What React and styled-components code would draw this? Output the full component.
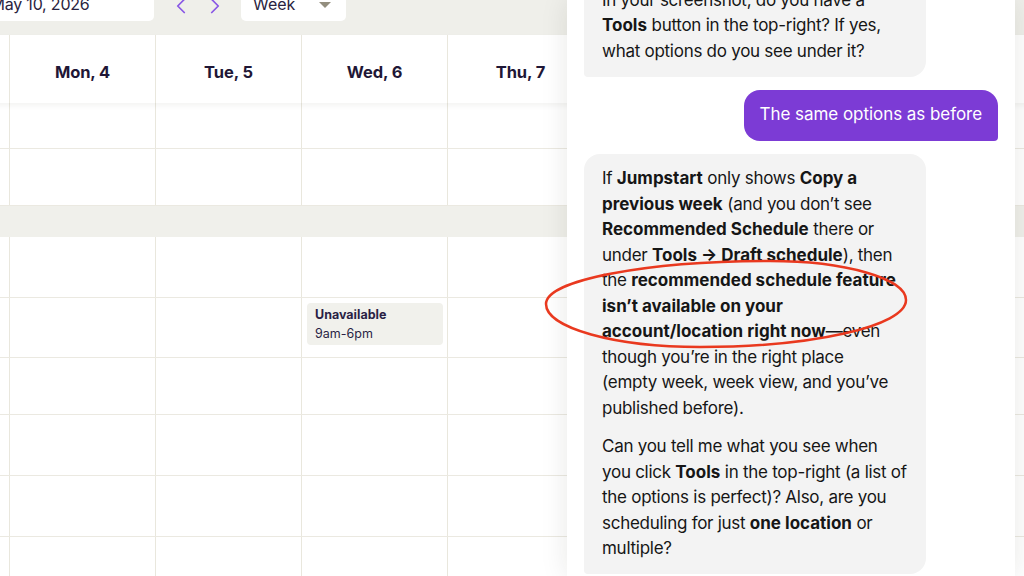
import React from "react";
import styled, { createGlobalStyle } from "styled-components";
import { ChevronLeft, ChevronRight } from "lucide-react";

const Global = createGlobalStyle`
  html, body { margin: 0; padding: 0; background: #ffffff; }
  body { font-family: Inter, "Noto Sans", sans-serif; -webkit-font-smoothing: antialiased; }
  * { box-sizing: border-box; }
`;

const Screen = styled.div`
  position: relative;
  width: 1024px;
  height: 576px;
  overflow: hidden;
  background: #ffffff;
`;

const Calendar = styled.div`
  margin: -15px 0 0 -100px;
  width: 1200px;
  display: flex;
  flex-direction: column;
`;

const Toolbar = styled.div`
  height: 50px;
  background: #efefea;
  display: flex;
  align-items: flex-start;
  gap: 12px;
  padding: 0 0 0 16px;
`;

const DateBox = styled.div`
  height: 36px;
  width: 238px;
  background: #ffffff;
  border-radius: 5px;
  display: flex;
  align-items: center;
  padding: 2px 0 0 12px;
  font-size: 16px;
  color: #2a2340;
  letter-spacing: -0.2px;
`;

const NavGroup = styled.div`
  display: flex;
  align-items: center;
  height: 36px;
  gap: 8px;
  padding: 6px 0 0 2px;
  color: #8957e5;
`;

const SelectBox = styled.div`
  height: 36px;
  width: 105px;
  margin-left: 1px;
  background: #ffffff;
  border-radius: 5px;
  display: flex;
  align-items: center;
  justify-content: space-between;
  padding: 2px 15px 0 12px;
  font-size: 16px;
  color: #2a2340;
`;

const Caret = styled.span`
  width: 0;
  height: 0;
  border-left: 6px solid transparent;
  border-right: 6px solid transparent;
  border-top: 6px solid #938e7e;
  margin-top: 1px;
`;

const cols = "109px repeat(7, 146px)";

const HeaderRow = styled.div`
  position: relative;
  z-index: 1;
  display: grid;
  grid-template-columns: ${cols};
  height: 68px;
  background: #ffffff;
  box-shadow: 0 3px 5px rgba(40, 35, 20, 0.05);
`;

const DayHead = styled.div`
  display: flex;
  align-items: center;
  justify-content: center;
  padding-top: 5px;
  border-left: ${(p) => (p.$stub ? "none" : "1px solid #e9e7dd")};
  font-size: 16.5px;
  font-weight: 700;
  color: #1f1736;
  letter-spacing: -0.1px;
`;

const Row = styled.div`
  display: grid;
  grid-template-columns: ${cols};
  height: ${(p) => p.$h}px;
  border-bottom: 1px solid #ebe9e1;
`;

const Cell = styled.div`
  border-left: ${(p) => (p.$stub ? "none" : "1px solid #e9e7dd")};
  padding: 5px 4px 0 5px;
`;

const Band = styled.div`
  height: 31px;
  background: #f0f0eb;
`;

const Shift = styled.div`
  height: 42px;
  background: #f1f1ec;
  border-radius: 4px;
  padding: 3px 8px 3px;
  display: flex;
  flex-direction: column;
  justify-content: center;
  gap: 3px;
  color: #2a1f45;
  font-size: 12.5px;
  line-height: 16px;
`;

const ShiftTitle = styled.span`
  font-weight: 700;
`;

const Panel = styled.aside`
  position: absolute;
  top: 0;
  bottom: 0;
  left: 567px;
  width: 448px;
  background: #ffffff;
  box-shadow: 0 0 26px rgba(30, 30, 20, 0.1);
  z-index: 2;
  overflow: hidden;
`;

const Messages = styled.div`
  height: 100%;
  display: flex;
  flex-direction: column;
  justify-content: flex-end;
  gap: 13px;
  padding: 0 17px 2px 17px;
`;

const Bubble = styled.div`
  align-self: ${(p) => (p.$mine ? "flex-end" : "flex-start")};
  max-width: 342px;
  padding: ${(p) => (p.$mine ? "12.75px 16px" : "12.5px 18px")};
  background: ${(p) => (p.$mine ? "#7c3bd5" : "#f3f3f3")};
  color: ${(p) => (p.$mine ? "#ffffff" : "#161616")};
  border-radius: ${(p) => (p.$mine ? "16px 16px 4px 16px" : "16px 16px 16px 4px")};
  font-size: 17px;
  line-height: 25.5px;
  letter-spacing: ${(p) => (p.$mine ? "-0.05px" : "-0.27px")};
  flex-shrink: 0;

  p { margin: 0; }
  p + p { margin-top: 13px; }
  b { font-weight: 700; letter-spacing: 0; }
`;

const Annotation = styled.svg`
  position: absolute;
  left: 0;
  top: 0;
  z-index: 3;
  pointer-events: none;
`;

const days = ["Mon, 4", "Tue, 5", "Wed, 6", "Thu, 7", "Fri, 8", "Sat, 9", "Sun, 10"];
const rowHeights = [46, 57, "band", 61, 60, 57, 61, 61, 60];

export default function App() {
  return (
    <Screen>
      <Global />
      <Calendar>
        <Toolbar>
          <DateBox>May 4 – May 10, 2026</DateBox>
          <NavGroup>
            <ChevronLeft size={26} strokeWidth={1.6} />
            <ChevronRight size={26} strokeWidth={1.6} />
          </NavGroup>
          <SelectBox>
            Week <Caret />
          </SelectBox>
        </Toolbar>
        <HeaderRow>
          <DayHead $stub />
          {days.map((d) => (
            <DayHead key={d}>{d}</DayHead>
          ))}
        </HeaderRow>
        {rowHeights.map((h, i) =>
          h === "band" ? (
            <Band key={i} />
          ) : (
            <Row key={i} $h={h}>
              <Cell $stub />
              {days.map((d, j) => (
                <Cell key={d}>
                  {i === 4 && j === 2 ? (
                    <Shift>
                      <ShiftTitle>Unavailable</ShiftTitle>
                      <span>9am-6pm</span>
                    </Shift>
                  ) : null}
                </Cell>
              ))}
            </Row>
          )
        )}
      </Calendar>

      <Panel>
        <Messages>
          <Bubble>
            <p>
              In your screenshot, do you have a <b>Tools</b> button in the top-right? If yes,
              what options do you see under it?
            </p>
          </Bubble>
          <Bubble $mine>The same options as before</Bubble>
          <Bubble>
            <p>
              If <b>Jumpstart</b> only shows <b>Copy a previous week</b> (and you don’t see{" "}
              <b>Recommended Schedule</b> there or under <b>Tools → Draft schedule</b>), then
              the <b>recommended schedule feature isn’t available on your account/location right now</b>
              —even though you’re in the right place
              <br />
              (empty week, week view, and you’ve published before).
            </p>
            <p>
              Can you tell me what you see when you click <b>Tools</b> in the top-right (a list of
              the options is perfect)? Also, are you scheduling for just <b>one location</b> or
              multiple?
            </p>
          </Bubble>
        </Messages>
      </Panel>

      <Annotation width="1024" height="576" viewBox="0 0 1024 576">
        <path
          d="M 546 304 C 546 280, 647 261, 770 261 C 845 261, 906 278.5, 906 300 C 906 326, 813 347, 700 347 C 615 347, 546 328, 546 304 Z"
          fill="none"
          stroke="#e9391f"
          strokeWidth="2.5"
        />
      </Annotation>
    </Screen>
  );
}
